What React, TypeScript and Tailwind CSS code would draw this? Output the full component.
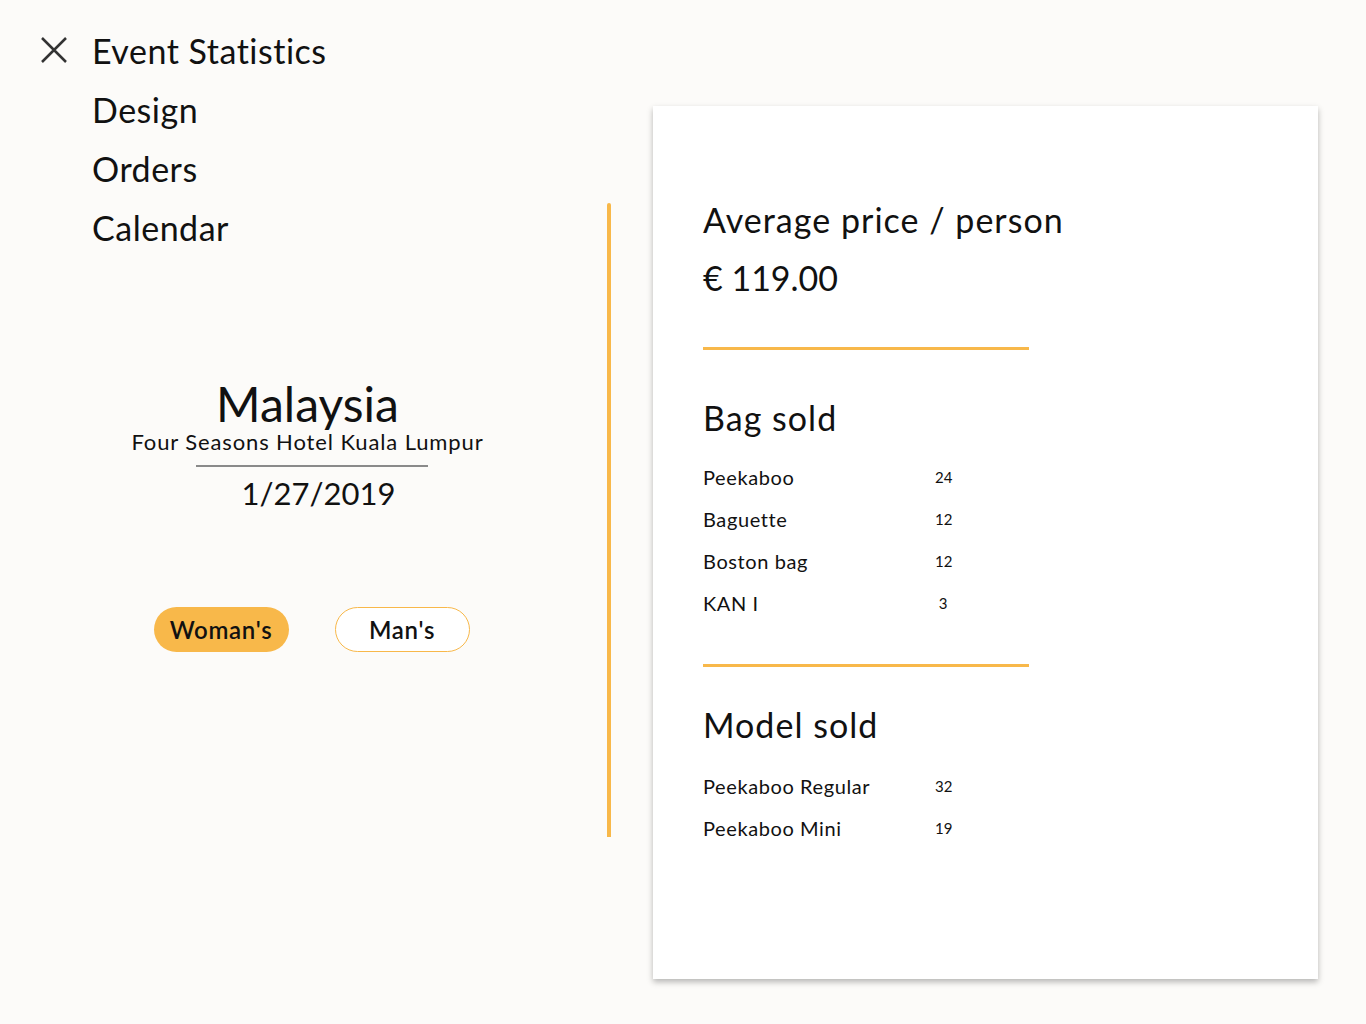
import React from "react";

const bags = [
  { name: "Peekaboo", count: 24 },
  { name: "Baguette", count: 12 },
  { name: "Boston bag", count: 12 },
  { name: "KAN I", count: 3 },
];

const models = [
  { name: "Peekaboo Regular", count: 32 },
  { name: "Peekaboo Mini", count: 19 },
];

const menu = ["Event Statistics", "Design", "Orders", "Calendar"];

const StatRow = ({ name, count }: { name: string; count: number }) => (
  <div className="flex items-center h-[42px]">
    <span className="w-[232px] text-[20px] tracking-[0.03em] text-[#111]">{name}</span>
    <span className="w-[16px] text-center text-[15px] text-[#111]">{count}</span>
  </div>
);

export default function App() {
  return (
    <div
      className="min-h-[1024px] w-[1366px] bg-[#fcfbf9] text-[#111] flex"
      style={{ fontFamily: "Lato, 'Open Sans', sans-serif" }}
    >
      {/* Left side */}
      <div className="w-[653px] shrink-0 flex flex-col">
        {/* Menu */}
        <div className="pt-[21px] pl-[40px] flex">
          <svg width="28" height="28" viewBox="0 0 28 28" className="mt-[15px] shrink-0">
            <path d="M2 2 L26 26 M26 2 L2 26" stroke="#333" strokeWidth="2.5" />
          </svg>
          <ul className="ml-[24px]">
            {menu.map((item) => (
              <li key={item} className="h-[59px] leading-[59px] text-[34px] tracking-[0.015em]">
                {item}
              </li>
            ))}
          </ul>
        </div>

        <div className="flex flex-1">
          {/* Event info */}
          <div className="w-[607px] pl-[8px] flex flex-col items-center">
            <div className="mt-[124px] flex flex-col items-center">
              <h1 className="text-[48px] leading-[46px]">Malaysia</h1>
              <p className="text-[22px] leading-[26px] mt-[2px] tracking-[0.04em]">
                Four Seasons Hotel Kuala Lumpur
              </p>
              <div className="w-[232px] h-[2px] bg-[#8a8a8a] mt-[10px] ml-[10px]" />
              <p className="text-[31px] leading-[40px] mt-[6px] ml-[22px]">1/27/2019</p>
            </div>
            <div className="mt-[94px] flex gap-[46px] ml-[8px]">
              <button className="w-[135px] h-[45px] rounded-full bg-[#f8b84a] text-[24px] font-semibold tracking-[0.03em]">
                Woman's
              </button>
              <button className="w-[135px] h-[45px] rounded-full border border-[#f8b84a] bg-white text-[24px] font-semibold tracking-[0.03em]">
                Man's
              </button>
            </div>
          </div>
          {/* Divider */}
          <div className="w-[4px] h-[634px] mt-[-54px] bg-[#f8b84a] rounded-t-sm" />
        </div>
      </div>

      {/* Card */}
      <div className="mt-[106px] w-[665px] h-[873px] bg-white shadow-[0_3px_6px_rgba(0,0,0,0.28)] pl-[50px] pt-[94px]">
        <h2 className="text-[34px] leading-[40px] tracking-[0.03em]">Average price / person</h2>
        <p className="text-[34px] leading-[40px] mt-[18px]">€ 119.00</p>
        <div className="w-[326px] h-[3px] bg-[#f8b84a] mt-[49px]" />

        <h2 className="text-[34px] leading-[40px] mt-[48px] tracking-[0.03em]">Bag sold</h2>
        <div className="mt-[18px]">
          {bags.map((b) => (
            <StatRow key={b.name} {...b} />
          ))}
        </div>
        <div className="w-[326px] h-[3px] bg-[#f8b84a] mt-[40px]" />

        <h2 className="text-[34px] leading-[40px] mt-[38px] tracking-[0.03em]">Model sold</h2>
        <div className="mt-[20px]">
          {models.map((m) => (
            <StatRow key={m.name} {...m} />
          ))}
        </div>
      </div>
    </div>
  );
}
